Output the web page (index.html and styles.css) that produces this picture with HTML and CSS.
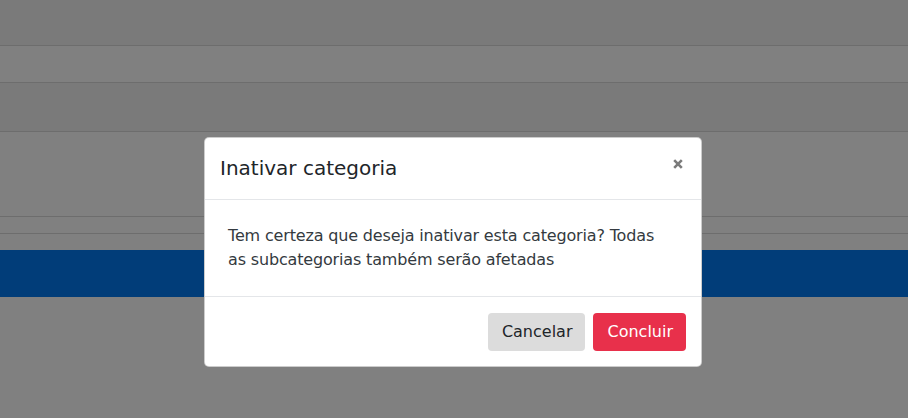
FILE: index.html
```html
<!DOCTYPE html>
<html lang="pt">
<head>
<meta charset="utf-8">
<title>Inativar categoria</title>
<link rel="stylesheet" href="styles.css">
</head>
<body>
<div class="page">
  <div class="row r1"></div>
  <div class="row r2"></div>
  <div class="row r3"></div>
  <div class="row r4"></div>
  <div class="row r5"></div>
  <div class="row r6"></div>
  <div class="band"></div>
  <div class="rest"></div>
</div>
<div class="modal">
  <div class="modal-header">
    <h5 class="modal-title">Inativar categoria</h5>
    <button class="close" aria-label="Fechar">
      <svg width="10" height="10" viewBox="0 0 10 10"><path d="M1.2 1.2 L8.8 8.8 M8.8 1.2 L1.2 8.8" stroke="#7b7b7b" stroke-width="2.6" stroke-linecap="butt"/></svg>
    </button>
  </div>
  <div class="modal-body">
    Tem certeza que deseja inativar esta categoria? Todas as subcategorias também serão afetadas
  </div>
  <div class="modal-footer">
    <button class="btn btn-light">Cancelar</button>
    <button class="btn btn-danger">Concluir</button>
  </div>
</div>
</body>
</html>
```

FILE: styles.css
```css
html, body {
  margin: 0;
  padding: 0;
}
body {
  width: 908px;
  height: 418px;
  overflow: hidden;
  background: #808080;
  font-family: "DejaVu Sans", "Open Sans", sans-serif;
  position: relative;
}
.page {
  display: flex;
  flex-direction: column;
  height: 418px;
}
.row {
  border-bottom: 1px solid #6d6d6d;
}
.r1 { height: 45px; background: #7a7a7a; }
.r2 { height: 36px; background: #808080; }
.r3 { height: 48px; background: #7a7a7a; }
.r4 { height: 84px; background: #808080; }
.r5 { height: 16px; background: #808080; }
.r6 { height: 16px; background: #808080; border-bottom: none; }
.band { height: 47px; background: #013d79; }
.rest { flex: 1; background: #808080; }

.modal {
  position: absolute;
  left: 204px;
  top: 137px;
  width: 496px;
  background: #fff;
  border: 1px solid rgba(0,0,0,0.2);
  border-radius: 5px;
  color: #212529;
}
.modal-header {
  display: flex;
  align-items: flex-start;
  justify-content: space-between;
  padding: 16px 16px 16px 15px;
  border-bottom: 1px solid #e4e6e9;
  height: 29px;
}
.modal-title {
  margin: 0;
  font-size: 20px;
  font-weight: 400;
  line-height: 29px;
  color: #212529;
}
.close {
  background: none;
  border: none;
  padding: 0;
  margin: 5px 2px 0 0;
  width: 10px;
  height: 10px;
  display: flex;
}
.modal-body {
  padding: 24px 36px 24px 23px;
  font-size: 16px;
  line-height: 24px;
  letter-spacing: -0.16px;
  color: #343a40;
  height: 48px;
  box-sizing: content-box;
}
.modal-footer {
  display: flex;
  justify-content: flex-end;
  gap: 8px;
  padding: 16px 15px 15px 16px;
  border-top: 1px solid #e4e6e9;
}
.btn {
  font-family: inherit;
  font-size: 16px;
  line-height: 24px;
  padding: 7px 13px 7px 14px;
  border: none;
  border-radius: 4px;
  height: 38px;
}
.btn-light {
  background: #dcdcdc;
  color: #212529;
}
.btn-danger {
  background: #e8304b;
  color: #fff;
}
```
